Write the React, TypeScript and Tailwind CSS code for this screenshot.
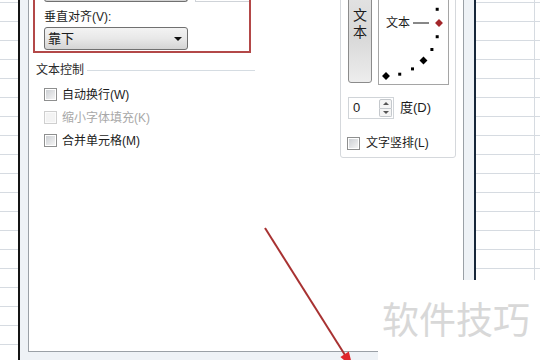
const rows = Array.from({ length: 19 }, (_, i) => i);

function GridColumn({ className }: { className: string }) {
  return (
    <div className={className}>
      <div className="h-[2px]" />
      {rows.map((r) => (
        <div key={r} className="h-[19px] border-t border-[#d6dbe1]" />
      ))}
    </div>
  );
}

function Check({ disabled = false }: { disabled?: boolean }) {
  return (
    <span
      className={`flex h-[13px] w-[13px] shrink-0 items-center justify-center border ${
        disabled ? "border-[#cfcfcf] bg-[#fbfbfb]" : "border-[#8e8f8f] bg-white"
      }`}
    >
      <span
        className={`h-[9px] w-[9px] ${
          disabled ? "bg-[#f3f3f3]" : "bg-gradient-to-br from-[#cdd0d4] to-[#f4f4f4]"
        }`}
      />
    </span>
  );
}

function Dial() {
  // dial centre sits left of the text, arc of dots on the right
  const cx = 7;
  const cy = 33;
  const r = 53;
  const marks = [-30, -15, 0, 15, 30, 45, 60, 75, 90];
  return (
    <svg className="absolute inset-0" width="69" height="94">
      <line x1="34" y1="33" x2="50" y2="33" stroke="#111" strokeWidth="1" />
      {marks.map((a) => {
        const x = cx + r * Math.cos((a * Math.PI) / 180);
        const y = cy + r * Math.sin((a * Math.PI) / 180);
        if (a % 45 === 0) {
          return (
            <rect
              key={a}
              x={x - 2.8}
              y={y - 2.8}
              width="5.6"
              height="5.6"
              transform={`rotate(45 ${x} ${y})`}
              fill={a === 0 ? "#a3262a" : "#000"}
            />
          );
        }
        return <rect key={a} x={x - 1.5} y={y - 1.5} width="3" height="3" fill="#000" />;
      })}
    </svg>
  );
}

export default function App() {
  return (
    <div className="relative flex h-[360px] w-[540px] overflow-hidden bg-white font-['Liberation_Sans','Noto_Sans_CJK_SC',sans-serif] text-[12px] text-[#1c1c1c]">
      <GridColumn className="w-[18px] shrink-0" />

      {/* dialog window */}
      <div className="flex h-full w-[458px] shrink-0 border-l-2 border-r-2 border-l-[#141414] border-r-[#17273a] bg-[#eef2f6] pb-[8px] pl-[8px] pr-[10px]">
        <div className="flex flex-1 border-x border-b border-[#9aa0a6] bg-white">
          {/* left column */}
          <div className="w-[227px] shrink-0">
            <div className="-mt-[12px] ml-[4px] w-[218px] border-2 border-[#b34848] pb-[1px] pl-[9px]">
              <div className="flex h-[12px] gap-[7px]">
                <div className="h-[12px] w-[144px] rounded-b-[3px] border-x border-b border-[#707070] bg-gradient-to-b from-[#e6e6e6] to-[#d3d3d3]" />
                <div className="h-[12px] flex-1 border-b border-l border-[#cfd3d8]" />
              </div>
              <div className="mt-[7px] leading-[16px]">垂直对齐(V):</div>
              <div className="mt-[2px] flex h-[23px] w-[144px] items-center justify-between rounded-[3px] border border-[#707070] bg-gradient-to-b from-[#f3f3f3] via-[#e8e8e8] to-[#d4d4d4] pl-[3px] pr-[5px] text-[13px]">
                <span>靠下</span>
                <span className="h-0 w-0 border-x-[4px] border-t-[4px] border-x-transparent border-t-[#111]" />
              </div>
            </div>

            <div className="mt-[9px] flex items-center pl-[7px] leading-[16px] text-[#2a2a2a]">
              <span>文本控制</span>
              <span className="ml-[3px] mr-[1px] h-px flex-1 bg-[#d5dce2]" />
            </div>

            <div className="mt-[5px]">
              <div className="flex h-[23px] items-center gap-[5px] pl-[15px]">
                <Check />
                <span>自动换行(W)</span>
              </div>
              <div className="flex h-[23px] items-center gap-[5px] pl-[15px] text-[#a8a8a8]">
                <Check disabled />
                <span>缩小字体填充(K)</span>
              </div>
              <div className="flex h-[23px] items-center gap-[5px] pl-[15px]">
                <Check />
                <span>合并单元格(M)</span>
              </div>
            </div>
          </div>

          {/* orientation group */}
          <div className="-mt-[12px] ml-[84px] w-[116px] shrink-0 self-start rounded-[3px] border border-[#d5d8dc] pb-[6px]">
            <div className="flex items-start gap-[6px] pl-[7px]">
              <div className="flex h-[94px] w-[24px] flex-col items-center rounded-[3px] border border-[#8b8b8b] bg-gradient-to-b from-[#e4e4e4] via-[#d8d8d8] to-[#ededed] pt-[17px] text-[14px] leading-[17px]">
                <span>文</span>
                <span>本</span>
              </div>
              <div className="relative h-[96px] w-[71px] border border-[#a5a5a5] bg-white">
                <Dial />
                <span className="absolute left-[7px] top-[25px] leading-[16px]">文本</span>
              </div>
            </div>

            <div className="mt-[12px] flex items-center pl-[7px]">
              <div className="flex h-[22px] w-[46px] items-center justify-between border border-[#d0d4d8] pl-[4px] pr-[1px] text-[13px]">
                <span>0</span>
                <div className="flex h-[18px] w-[13px] flex-col">
                  <div className="flex flex-1 items-center justify-center rounded-t-[2px] border border-[#c4c8cc] bg-[#f4f4f4]">
                    <span className="h-0 w-0 border-x-[3px] border-b-[3px] border-x-transparent border-b-[#555]" />
                  </div>
                  <div className="flex flex-1 items-center justify-center rounded-b-[2px] border border-t-0 border-[#c4c8cc] bg-[#f4f4f4]">
                    <span className="h-0 w-0 border-x-[3px] border-t-[3px] border-x-transparent border-t-[#555]" />
                  </div>
                </div>
              </div>
              <span className="ml-[6px] text-[13px]">度(D)</span>
            </div>

            <div className="mt-[16px] flex h-[16px] items-center gap-[6px] pl-[6px]">
              <Check />
              <span>文字竖排(L)</span>
            </div>
          </div>
        </div>
      </div>

      {/* sheet cells on the right */}
      <div className="flex flex-1">
        <GridColumn className="w-[59px] border-r border-[#d6dbe1]" />
        <GridColumn className="flex-1" />
      </div>

      {/* watermark */}
      <div className="absolute bottom-0 left-[378px] right-0 top-[280px] bg-white pl-[4px] pt-[18px] font-['Noto_Sans_CJK_SC',sans-serif] text-[37px] leading-[40px] text-[#d8d8d8]">
        软件技巧
      </div>

      {/* annotation arrow */}
      <svg className="pointer-events-none absolute inset-0" width="540" height="360">
        <line x1="265" y1="228" x2="345" y2="355" stroke="#a83232" strokeWidth="2" />
        <polygon points="353,368 340.4,356.9 348.8,351.5" fill="#e0262b" />
      </svg>
    </div>
  );
}
